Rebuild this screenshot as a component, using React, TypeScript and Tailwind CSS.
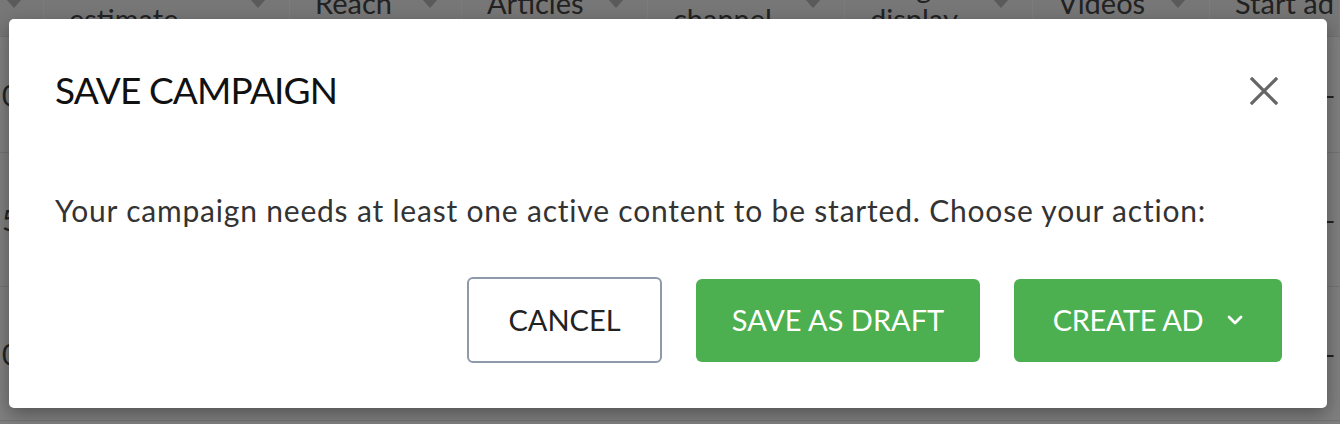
import React from "react";

const columns = [
  { w: 44, label: [""] },
  { w: 246, label: ["Cost", "estimate"] },
  { w: 172, label: ["Reach"] },
  { w: 186, label: ["Articles"] },
  { w: 197, label: ["Sales", "channel"] },
  { w: 188, label: ["Image", "display"] },
  { w: 177, label: ["Videos"] },
  { w: 130, label: ["Start ad"] },
];

const rows = [
  { h: 116, left: "0", right: "–" },
  { h: 134, left: "5", right: "–" },
  { h: 134, left: "0", right: "–" },
];

function Triangle() {
  return (
    <svg width="18" height="10" viewBox="0 0 18 10" className="shrink-0">
      <path d="M0 0 H18 L9 10 Z" fill="#b4b4b4" />
    </svg>
  );
}

function BackgroundTable() {
  return (
    <div className="flex flex-col font-['Lato',sans-serif] text-[29px] text-[#444]">
      {/* Header */}
      <div className="flex h-[77px] -mt-[40px] pt-[9px] bg-[#eeeeee] border-b border-[#e2e2e2]">
        {columns.map((c, i) => (
          <div
            key={i}
            style={{ width: c.w }}
            className={`flex items-center justify-between shrink-0 border-r border-[#f8f8f8] ${
              i === 0 ? "pl-[5px] pr-[24px]" : "pl-[25px] pr-[22px]"
            }`}
          >
            <div className="flex flex-col leading-[32px] whitespace-nowrap">
              {c.label.map((l, j) => (
                <span key={j}>{l}</span>
              ))}
            </div>
            {i < columns.length - 1 && <Triangle />}
          </div>
        ))}
      </div>
      {/* Rows */}
      {rows.map((r, i) => (
        <div
          key={i}
          style={{ height: r.h }}
          className="flex items-center justify-between bg-white border-b border-[#e6e6e6] pl-[2px] pr-[4px]"
        >
          <span className="text-[28px]">{r.left}</span>
          <span className="text-[28px]">{r.right}</span>
        </div>
      ))}
      <div className="h-[40px] bg-white" />
    </div>
  );
}

function CloseIcon() {
  return (
    <svg width="28" height="28" viewBox="0 0 28 28">
      <path
        d="M2 2 L26 26 M26 2 L2 26"
        stroke="#666666"
        strokeWidth="3.2"
        strokeLinecap="square"
      />
    </svg>
  );
}

function Chevron() {
  return (
    <svg width="16" height="10" viewBox="0 0 16 10">
      <path
        d="M2 2 L8 8 L14 2"
        stroke="white"
        strokeWidth="2.8"
        fill="none"
        strokeLinecap="round"
        strokeLinejoin="round"
      />
    </svg>
  );
}

export default function App() {
  return (
    <div className="relative w-[1340px] h-[424px] overflow-hidden bg-white">
      <BackgroundTable />

      {/* Overlay + dialog */}
      <div className="absolute inset-0 bg-black/50 flex items-start pl-[9px] pt-[19px]">
        <div className="w-[1318px] h-[389px] bg-white rounded-[5px] shadow-[0_6px_18px_rgba(0,0,0,0.35)] flex flex-col font-['Lato',sans-serif]">
          {/* Title row */}
          <div className="flex items-start justify-between pt-[51px] pl-[46px] pr-[49px]">
            <h2 className="text-[37px] leading-[40px] tracking-[-0.9px] text-[#111] font-normal">
              SAVE CAMPAIGN
            </h2>
            <button className="mt-[7px] p-0 bg-transparent border-none">
              <CloseIcon />
            </button>
          </div>

          {/* Body */}
          <p className="mt-[82px] pl-[46px] text-[30px] leading-[36px] tracking-[0.8px] text-[#333]">
            Your campaign needs at least one active content to be started. Choose your action:
          </p>

          {/* Actions */}
          <div className="mt-[49px] flex items-center justify-end gap-[34px] pr-[45px]">
            <button className="w-[195px] h-[86px] rounded-[6px] border-2 border-[#8e99ab] bg-white text-[29px] text-[#222]">
              CANCEL
            </button>
            <button className="w-[284px] h-[83px] rounded-[6px] bg-[#4caf50] text-[29px] text-white">
              SAVE AS DRAFT
            </button>
            <button className="w-[268px] h-[83px] rounded-[6px] bg-[#4caf50] text-[29px] tracking-[-0.4px] text-white flex items-center justify-center gap-[24px]">
              <span>CREATE AD</span>
              <Chevron />
            </button>
          </div>
        </div>
      </div>
    </div>
  );
}
